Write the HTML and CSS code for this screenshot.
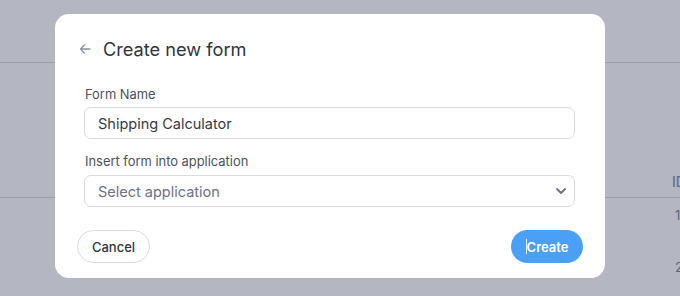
FILE: index.html
```html
<!DOCTYPE html>
<html lang="en">
<head>
<meta charset="utf-8">
<title>Create new form</title>
<link rel="stylesheet" href="styles.css">
</head>
<body>
<div class="page">
  <div class="topbar"></div>
  <div class="table">
    <div class="thead">
      <div class="cell"></div>
      <div class="cell th">ID</div>
    </div>
    <div class="row">
      <div class="cell"></div>
      <div class="cell">1</div>
    </div>
    <div class="row">
      <div class="cell"></div>
      <div class="cell">2</div>
    </div>
  </div>
</div>

<div class="modal">
  <div class="modal-header">
    <svg class="back" width="12" height="12" viewBox="0 0 12 12" aria-hidden="true">
      <path d="M11 6H1.5M5.5 2L1.5 6l4 4" fill="none" stroke="#8b909b" stroke-width="1.3" stroke-linecap="round" stroke-linejoin="round"/>
    </svg>
    <h1 class="title">Create new form</h1>
  </div>
  <div class="fields">
    <label class="label label-first">Form Name</label>
    <div class="input">Shipping Calculator</div>
    <label class="label label-second">Insert form into application</label>
    <div class="input select">
      <span class="placeholder">Select application</span>
      <svg class="chevron" width="12" height="8" viewBox="0 0 12 8" aria-hidden="true">
        <path d="M2 2l4 4 4-4" fill="none" stroke="#6c7180" stroke-width="1.8" stroke-linecap="round" stroke-linejoin="round"/>
      </svg>
    </div>
  </div>
  <div class="actions">
    <button class="btn btn-cancel">Cancel</button>
    <button class="btn btn-create"><span class="caret"></span>Create</button>
  </div>
</div>
</body>
</html>
```

FILE: styles.css
```css
html, body {
  margin: 0;
  padding: 0;
}
body {
  width: 680px;
  height: 296px;
  overflow: hidden;
  background: #b4b7c2;
  font-family: Inter, "Noto Sans", sans-serif;
  position: relative;
}
.page {
  width: 680px;
  height: 296px;
}
.topbar {
  height: 62px;
  border-bottom: 1px solid #9a9eab;
}
.table {
  padding-top: 103px;
}
.thead, .row {
  display: grid;
  grid-template-columns: 672px 40px;
  color: #5f6470;
  font-size: 13px;
  line-height: 16px;
}
.thead {
  height: 31px;
  align-items: center;
  border-bottom: 1px solid #9a9eab;
}
.th {
  color: #62708a;
  font-weight: 500;
  font-size: 14px;
}
.row {
  height: 52px;
  align-items: start;
  padding-top: 9px;
  box-sizing: border-box;
}
.row .cell {
  padding-left: 3px;
}
.modal {
  position: absolute;
  left: 55px;
  top: 14px;
  width: 550px;
  height: 264px;
  box-sizing: border-box;
  background: #ffffff;
  border-radius: 14px;
  padding: 23px 22px 0 22px;
}
.modal-header {
  display: flex;
  align-items: center;
  height: 24px;
  padding-left: 2px;
}
.back {
  margin-right: 12px;
}
.title {
  margin: 0;
  font-size: 18.2px;
  font-weight: 400;
  color: #30343f;
  line-height: 24px;
}
.fields {
  padding: 0 8px 0 7px;
  display: flex;
  flex-direction: column;
}
.label {
  display: block;
  font-size: 12.9px;
  line-height: 16px;
  color: #4d5261;
  padding-left: 1px;
}
.label-first {
  margin-top: 26px;
  margin-bottom: 4px;
}
.label-second {
  margin-top: 15px;
  margin-bottom: 5px;
}
.input {
  height: 32px;
  box-sizing: border-box;
  border: 1px solid #d9dbe1;
  border-radius: 7px;
  padding: 0 13px;
  display: flex;
  align-items: center;
  font-size: 14.5px;
  color: #363b47;
}
.select {
  justify-content: space-between;
  padding-right: 7px;
}
.placeholder {
  color: #6c7284;
}
.actions {
  margin-top: 23px;
  display: flex;
  justify-content: space-between;
}
.btn {
  height: 33px;
  border-radius: 17px;
  font-family: Inter, "Noto Sans", sans-serif;
  font-size: 13px;
  font-weight: 500;
  box-sizing: border-box;
  display: flex;
  align-items: center;
  justify-content: center;
  cursor: pointer;
}
.btn-cancel {
  width: 73px;
  background: #ffffff;
  border: 1px solid #d9dbe1;
  color: #2f3440;
}
.btn-create {
  width: 72px;
  background: #4a9ff7;
  border: none;
  color: #ffffff;
  font-weight: 600;
}
.caret {
  display: inline-block;
  width: 1px;
  height: 15px;
  background: #e8f1fd;
}
```
